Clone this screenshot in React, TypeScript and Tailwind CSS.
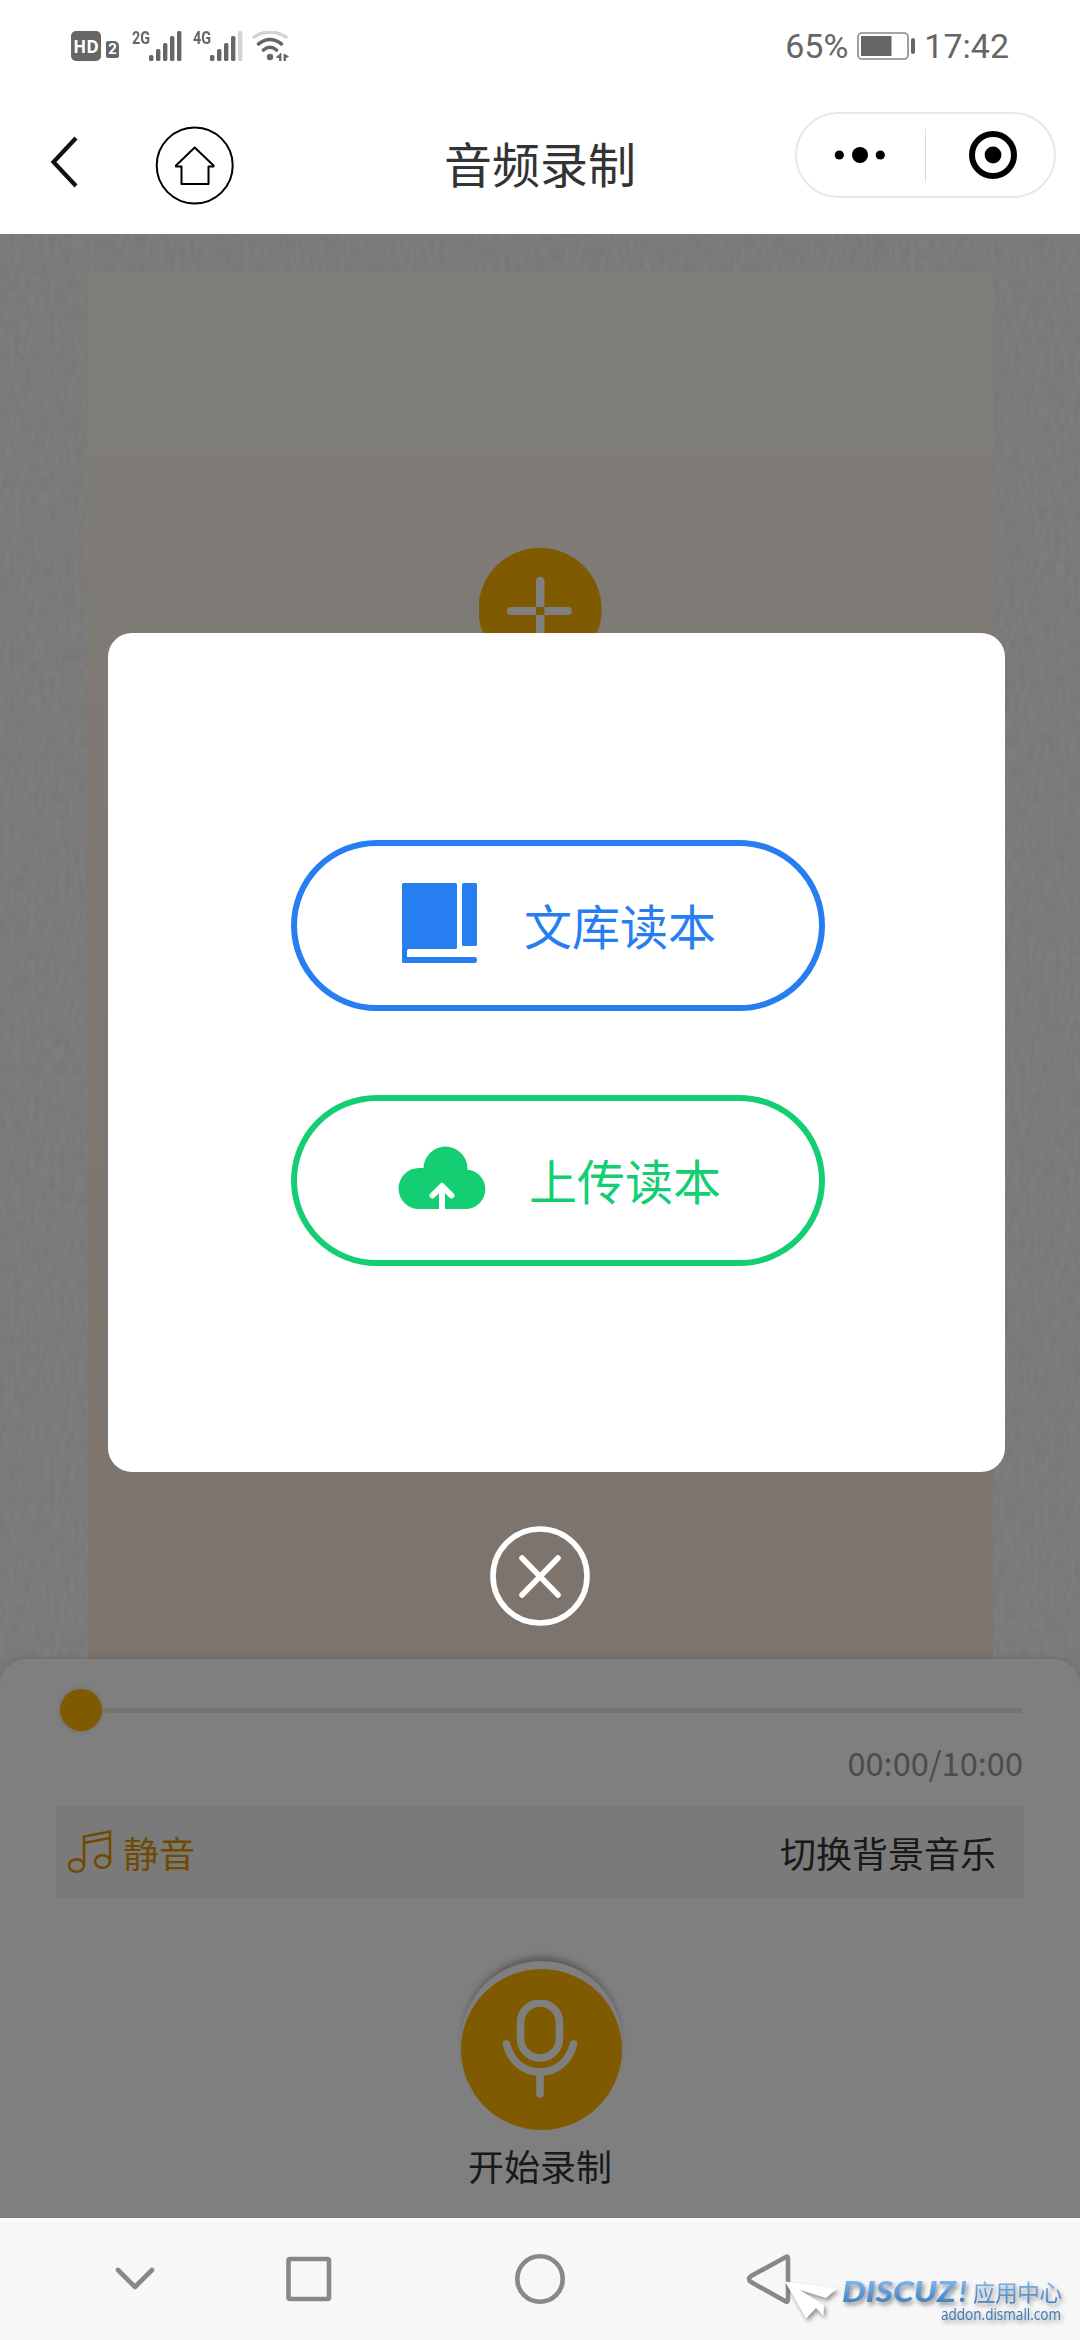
import type { ReactNode } from "react"

const SIGNAL_BARS = [
  { x: 0, h: 6 },
  { x: 7, h: 12 },
  { x: 14, h: 18 },
  { x: 21, h: 25 },
  { x: 28, h: 30 }
]

function Signal({ label, active }: { label: string; active: number }) {
  return (
    <div className="flex h-[30px] items-start">
      <span className="w-[17px] origin-left scale-x-[0.8] font-[Roboto] text-[18px] leading-[14px] font-bold text-[#666]">
        {label}
      </span>
      <svg width="33" height="30" viewBox="0 0 33 30">
        {SIGNAL_BARS.map((bar, i) => (
          <rect
            key={bar.x}
            x={bar.x}
            y={30 - bar.h}
            width="4.4"
            height={bar.h}
            rx="1.6"
            fill={i < active ? "#666" : "#d4d4d4"}
          />
        ))}
      </svg>
    </div>
  )
}

function StatusBar() {
  return (
    <div className="flex h-[92px] items-center justify-between pr-[71px] pl-[71px] font-[Roboto] text-[#666]">
      <div className="flex h-[30px] items-start">
        <div className="flex h-[30px] w-[30px] items-center justify-center rounded-[5px] bg-[#666] font-['Open_Sans'] text-[17px] leading-none font-bold text-white">
          HD
        </div>
        <div className="mt-[10px] ml-[5px] flex h-[17px] w-[13px] items-center justify-center rounded-[2px] rounded-tr-[5px] bg-[#666] text-[15px] leading-none font-bold text-white">
          2
        </div>
        <div className="ml-[13px]">
          <Signal label="2G" active={5} />
        </div>
        <div className="ml-[11px]">
          <Signal label="4G" active={4} />
        </div>
        <svg className="ml-[9px]" width="38" height="30" viewBox="0 0 38 30" fill="none" strokeLinecap="round">
          <path d="M2 6Q18-4 34 6" stroke="#d4d4d4" strokeWidth="3.4" />
          <path d="M6.500 13Q18 4 29.500 13" stroke="#666" strokeWidth="3.600" />
          <path d="M11.500 19Q18 13.500 24.500 19" stroke="#666" strokeWidth="3.600" />
          <circle cx="18" cy="26" r="3.200" fill="#666" />
          <path d="M29 22.500V30H27.500V27L24.500 26.200ZM32 30V23L36.500 25.500L33.500 27V30Z" fill="#666" stroke="#666" strokeWidth="0.800" />
        </svg>
      </div>

      <div className="flex items-center">
        <span className="text-[34px] leading-none">65%</span>
        <svg className="ml-[9px]" width="60" height="28" viewBox="0 0 60 28">
          <rect x="1" y="1" width="50" height="26" rx="4" fill="none" stroke="#888" strokeWidth="1.600" />
          <rect x="4" y="4" width="30.500" height="20" fill="#666" />
          <rect x="54" y="6" width="4" height="16" rx="2" fill="#666" />
        </svg>
        <span className="ml-[7px] text-[34px] leading-none">17:42</span>
      </div>
    </div>
  )
}

function NavHeader() {
  return (
    <div className="flex h-[142px] pl-[50px]">
      <svg className="mt-[44px]" width="30" height="52" viewBox="0 0 30 52">
        <path d="M26 2L3.500 26L26 50" fill="none" stroke="#111" strokeWidth="4.200" />
      </svg>

      <svg className="mt-[34px] ml-[75px]" width="80" height="80" viewBox="0 0 80 80" fill="none" stroke="#000" strokeWidth="2">
        <circle cx="39.700" cy="39.500" r="38" />
        <path d="M39.700 21.500L58.500 39.500V40.500H53.500V58H26.500V40.500H21V39.500Z" strokeLinejoin="round" />
      </svg>

      <h1 className="mt-[46px] ml-[209px] w-[200px] text-[48px] leading-[48px] text-[#333]">
        音频录制
      </h1>

      <div className="mt-[20px] ml-[151px] flex h-[86px] w-[261px] items-center rounded-full border-2 border-[#e8e8e8]">
        <svg width="128" height="52" viewBox="0 0 128 52">
          <circle cx="42.300" cy="26" r="4.600" />
          <circle cx="63" cy="26" r="8" />
          <circle cx="83.300" cy="26" r="4.600" />
        </svg>
        <div className="h-[53px] w-px bg-[#dcdcdc]" />
        <svg className="ml-[43px]" width="50" height="50" viewBox="0 0 50 50">
          <circle cx="24" cy="25" r="21" fill="none" stroke="#000" strokeWidth="6" />
          <circle cx="24" cy="25" r="8.400" />
        </svg>
      </div>
    </div>
  )
}

function Wallpaper() {
  return (
    <svg className="absolute inset-0" width="1080" height="1450">
      <filter id="linen" x="0" y="0" width="100%" height="100%" colorInterpolationFilters="sRGB">
        <feTurbulence type="fractalNoise" baseFrequency="0.2 0.07" numOctaves="3" seed="4" />
        <feColorMatrix values="0.100 0 0 0 0.915  0.080 0.020 0 0 0.915  0.080 0 0.020 0 0.910  0 0 0 0 1" />
      </filter>
      <rect width="1080" height="1450" filter="url(#linen)" />
    </svg>
  )
}

function Recorder() {
  return (
    <div className="flex h-full flex-col">
      {/* CANVAS */}

      <div className="relative h-[1425px] bg-[#f6f6f3]">
        <Wallpaper />
        <div className="relative ml-[88px] flex h-full w-[905px] flex-col pt-[38px]">
          <div className="h-[184px] bg-[#fffaf0]" />
          <div className="flex flex-1 justify-center bg-linear-to-b from-[#fef6ec] to-[#f9e8da] pt-[91px]">
            <svg width="124" height="126" viewBox="0 0 124 126">
              <circle cx="61" cy="62.500" r="61.700" fill="#ffb400" />
              <path
                d="M32 60H57V68H32A4 4 0 0 1 32 60ZM65.500 60H89A4 4 0 0 1 89 68H65.500ZM57 60V34A4.200 4.200 0 0 1 65.500 34V60ZM57 68H65.500V92A4.200 4.200 0 0 1 57 92Z"
                fill="#fff"
              />
            </svg>
          </div>
        </div>
      </div>

      {/* CONTROLS */}

      <div className="relative h-[559px] bg-[#f3f3f1]">
        <div className="flex h-full flex-col rounded-t-[26px] bg-white px-[56px] pt-[30px] shadow-[0_-2px_5px_rgba(0,0,0,0.1)]">
          <div className="flex h-[42px] items-center pl-[4px]">
            <div className="h-[42px] w-[42px] rounded-full bg-[#ffb400] shadow-[0_0_6px_rgba(0,0,0,0.15)]" />
            <div className="h-[5px] w-[920px] bg-[#e9e9e9]" />
          </div>

          <div className="mt-[14px] h-[34px] pr-[1px] text-right text-[32.600px] leading-[34px] text-[#999]">
            00:00/10:00
          </div>

          <div className="mt-[27px] flex h-[92px] items-center bg-[#f5f5f5] pr-[28px] pl-[12px] text-[36px] leading-none">
            <svg width="46" height="46" viewBox="0 0 46 46" fill="none" stroke="#e09400" strokeWidth="2.600">
              <ellipse cx="8.500" cy="36.500" rx="7.500" ry="6.200" />
              <ellipse cx="34.500" cy="32.500" rx="7.500" ry="6.200" />
              <path d="M16 37V7.500L42 2.500V33M16 14L42 9" />
            </svg>
            <span className="ml-[9px] text-[#e09400]">静音</span>
            <span className="ml-auto text-[#333]">切换背景音乐</span>
          </div>

          <div className="mt-[63px] flex flex-col items-center">
            <div className="ml-[3px] h-[169px] w-[161px] rounded-full bg-white shadow-[0_-7px_8px_-4px_rgba(0,0,0,0.38)]">
              <div className="mt-[8px] flex h-[161px] w-[161px] items-center justify-center rounded-full bg-[#ffb400]">
                <svg
                  className="mr-[4px]"
                  width="76"
                  height="100"
                  viewBox="0 0 76 100"
                  fill="none"
                  stroke="#fff"
                  strokeWidth="7.600"
                  strokeLinecap="round"
                >
                  <rect x="18.500" y="3" width="39" height="55" rx="19.500" />
                  <path d="M4.500 44C9 62 22 72 38 72S67 62 71.500 44M38 73V94" />
                </svg>
              </div>
            </div>
            <div className="mt-[17px] text-[36px] leading-[36px] text-[#333]">开始录制</div>
          </div>
        </div>
      </div>
    </div>
  )
}

function ChoiceButton({
  icon,
  label,
  className
}: {
  icon: ReactNode
  label: string
  className: string
}) {
  return (
    <button
      className={`flex h-[171px] w-[534px] items-center rounded-full border-[6px] text-[48px] leading-none ${className}`}
    >
      {icon}
      <span className="pb-[3px]">{label}</span>
    </button>
  )
}

function BookIcon() {
  return (
    <svg className="mr-[47px] ml-[105px]" width="75" height="86" viewBox="0 0 75 86" fill="currentColor">
      <path d="M1.500 0H53.500Q55 0 55 1.500V64.500Q55 66 53.500 66H7Q5 66 5 68V74H73Q75 74 75 77T73 80H1.500Q0 80 0 78.500V1.500Q0 0 1.500 0Z" />
      <rect x="60" y="0" width="15" height="63" rx="1.500" />
    </svg>
  )
}

function CloudIcon() {
  return (
    <svg className="mr-[43px] mb-[3px] ml-[101px]" width="88" height="66" viewBox="0 0 88 66" fill="currentColor">
      <circle cx="47.500" cy="22.500" r="22" />
      <circle cx="21" cy="42.500" r="20.500" />
      <circle cx="67.500" cy="43.200" r="19.800" />
      <path d="M21 22H47L67 23.500V63H21Z" />
      <path
        d="M44 41V63M34.500 49.500L44 40L53.500 49.500"
        fill="none"
        stroke="#fff"
        strokeWidth="6"
        strokeLinecap="round"
        strokeLinejoin="round"
      />
      <rect x="41" y="60" width="6" height="6" fill="#fff" />
    </svg>
  )
}

function SourceDialog() {
  return (
    <div className="absolute inset-0 bg-black/50 pt-[399px]">
      <div className="ml-[108px] flex h-[839px] w-[897px] flex-col gap-[84px] rounded-[24px] bg-white pt-[207px] pl-[183px]">
        <ChoiceButton icon={<BookIcon />} label="文库读本" className="border-[#267ef0] text-[#267ef0]" />
        <ChoiceButton icon={<CloudIcon />} label="上传读本" className="border-[#14ce74] text-[#14ce74]" />
      </div>

      <svg className="mx-auto mt-[54px]" width="100" height="100" viewBox="0 0 100 100" fill="none" stroke="#fff" strokeLinecap="round">
        <circle cx="50" cy="50" r="47" strokeWidth="5.600" />
        <path d="M32 32L68 69M68 32L32 69" strokeWidth="5.600" />
      </svg>
    </div>
  )
}

function Watermark() {
  return (
    <svg
      className="absolute top-[42px] left-[784px] drop-shadow-[2px_3px_2px_rgba(0,0,0,0.4)]"
      width="290"
      height="70"
      viewBox="0 -12 290 70"
    >
      <linearGradient id="brand" gradientUnits="userSpaceOnUse" x1="0" y1="3" x2="0" y2="27">
        <stop offset="0" stopColor="#80b6ee" />
        <stop offset="1" stopColor="#3f7dbd" />
      </linearGradient>
      <path d="M1 4.500L53 11.500L42 21L16 13L40 28L39.500 39L32 31L22 41.500Z" fill="#fff" />
      <g fill="url(#brand)">
        <text x="58" y="25" textLength="114" lengthAdjust="spacingAndGlyphs" className="font-[Lato] text-[28px] font-black italic">
          DISCUZ
        </text>
        <text x="175" y="25" className="font-[Lato] text-[29px] font-black italic">
          !
        </text>
        <text x="189" y="23.500" textLength="89" className="text-[22.500px]">
          应用中心
        </text>
      </g>
      <text
        x="157"
        y="42.500"
        textLength="120"
        lengthAdjust="spacingAndGlyphs"
        fill="#3a78b5"
        className="font-['Open_Sans','Noto_Sans',sans-serif] text-[15.500px]"
      >
        addon.dismall.com
      </text>
    </svg>
  )
}

function SystemNav() {
  return (
    <div className="relative h-[122px] border-t-[5px] border-[#fafafa] bg-[#f7f7f7]">
      <svg width="800" height="117" viewBox="0 0 800 117" fill="none" stroke="#888" strokeWidth="4.600" strokeLinejoin="round" strokeLinecap="round">
        <path d="M118 47L135 64L152 47" />
        <rect x="288.500" y="36" width="40.500" height="40" rx="1.500" />
        <circle cx="540" cy="56" r="22.700" />
        <path d="M785 34.500Q788 32 788 36V76Q788 80 785 78L751 59Q747 56 751 53Z" />
      </svg>
      <Watermark />
    </div>
  )
}

export default function App() {
  return (
    <div className="relative flex h-[2340px] w-[1080px] flex-col overflow-hidden bg-white font-['Noto_Sans_CJK_SC',sans-serif]">
      <StatusBar />
      <NavHeader />
      <div className="relative h-[1984px]">
        <Recorder />
        <SourceDialog />
      </div>
      <SystemNav />
    </div>
  )
}
